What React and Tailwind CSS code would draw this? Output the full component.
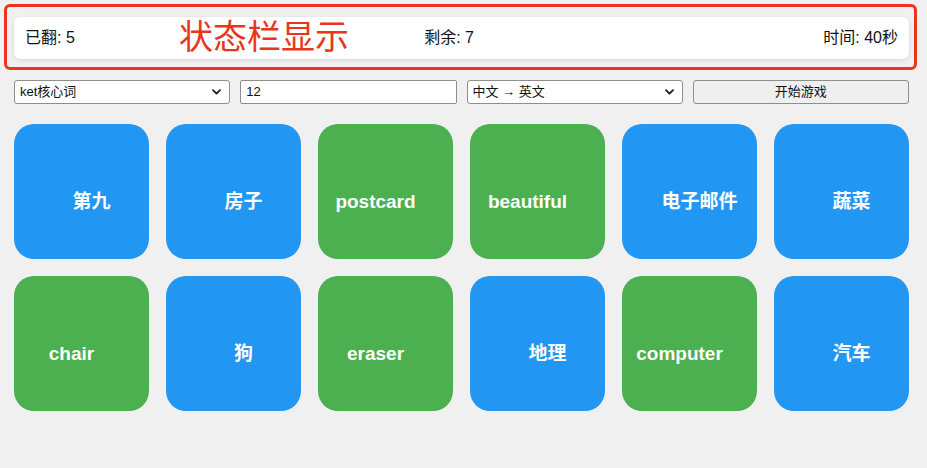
import React from 'react';

const cards = [
  { text: '第九', color: 'blue' },
  { text: '房子', color: 'blue' },
  { text: 'postcard', color: 'green' },
  { text: 'beautiful', color: 'green' },
  { text: '电子邮件', color: 'blue' },
  { text: '蔬菜', color: 'blue' },
  { text: 'chair', color: 'green' },
  { text: '狗', color: 'blue' },
  { text: 'eraser', color: 'green' },
  { text: '地理', color: 'blue' },
  { text: 'computer', color: 'green' },
  { text: '汽车', color: 'blue' },
];

const font = "font-['Liberation_Sans','Noto_Sans_CJK_SC',sans-serif]";

const Chevron = () => (
  <svg className="absolute right-[9px] top-1/2 -translate-y-1/2 pointer-events-none" width="9" height="6" viewBox="0 0 9 6">
    <path d="M1 1.2 L4.5 4.7 L8 1.2" fill="none" stroke="#222" strokeWidth="1.9" strokeLinecap="round" strokeLinejoin="round" />
  </svg>
);

const Select = ({ value }) => (
  <div className="relative">
    <div className="h-[24px] bg-white border border-[#8e8e8e] rounded-[3px] pl-[5px] flex items-center text-[13px] text-[#111]">
      {value}
    </div>
    <Chevron />
  </div>
);

const App = () => {
  return (
    <div className={`min-h-[468px] bg-[#f0f0f0] ${font}`}>
      <div className="w-[895px] ml-[14px] pt-[17px]">
        {/* status bar */}
        <div className="relative">
          <div className="h-[42px] bg-white rounded-[6px] shadow-[0_1px_4px_rgba(0,0,0,0.12)] px-[11px] flex items-center justify-between text-[16px] text-[#111]">
            <span>已翻: 5</span>
            <span>剩余: 7</span>
            <span>时间: 40秒</span>
          </div>
          {/* annotation */}
          <div className="absolute left-[-10px] right-[-8px] top-[-13px] bottom-[-11px] border-[3px] border-[#e8361d] rounded-[6px] pointer-events-none" />
          <span className="absolute left-[165px] top-[-2px] text-[34px] leading-[40px] text-[#e8361d] font-['Noto_Sans_CJK_SC',sans-serif]">状态栏显示</span>
        </div>

        {/* controls */}
        <div className="grid grid-cols-4 gap-[10px] mt-[21px]">
          <Select value="ket核心词" />
          <div className="h-[24px] bg-white border border-[#8e8e8e] rounded-[2px] pl-[5px] flex items-center text-[13px] text-[#111]">12</div>
          <Select value="中文 → 英文" />
          <button className="h-[24px] bg-[#efefef] border border-[#8e8e8e] rounded-[3px] text-[13px] text-[#111]">开始游戏</button>
        </div>

        {/* cards */}
        <div className="grid grid-cols-6 gap-[17px] mt-[20px]">
          {cards.map((c, i) => {
            const en = c.color === 'green';
            return (
              <div
                key={i}
                className={`h-[135px] rounded-[20px] flex items-center justify-center pt-[21px] text-white font-bold text-[19px] ${en ? 'bg-[#4caf50] pr-[20px]' : 'bg-[#2196f3] pl-[20px]'}`}
              >
                {c.text}
              </div>
            );
          })}
        </div>
      </div>
    </div>
  );
};

export default App;
